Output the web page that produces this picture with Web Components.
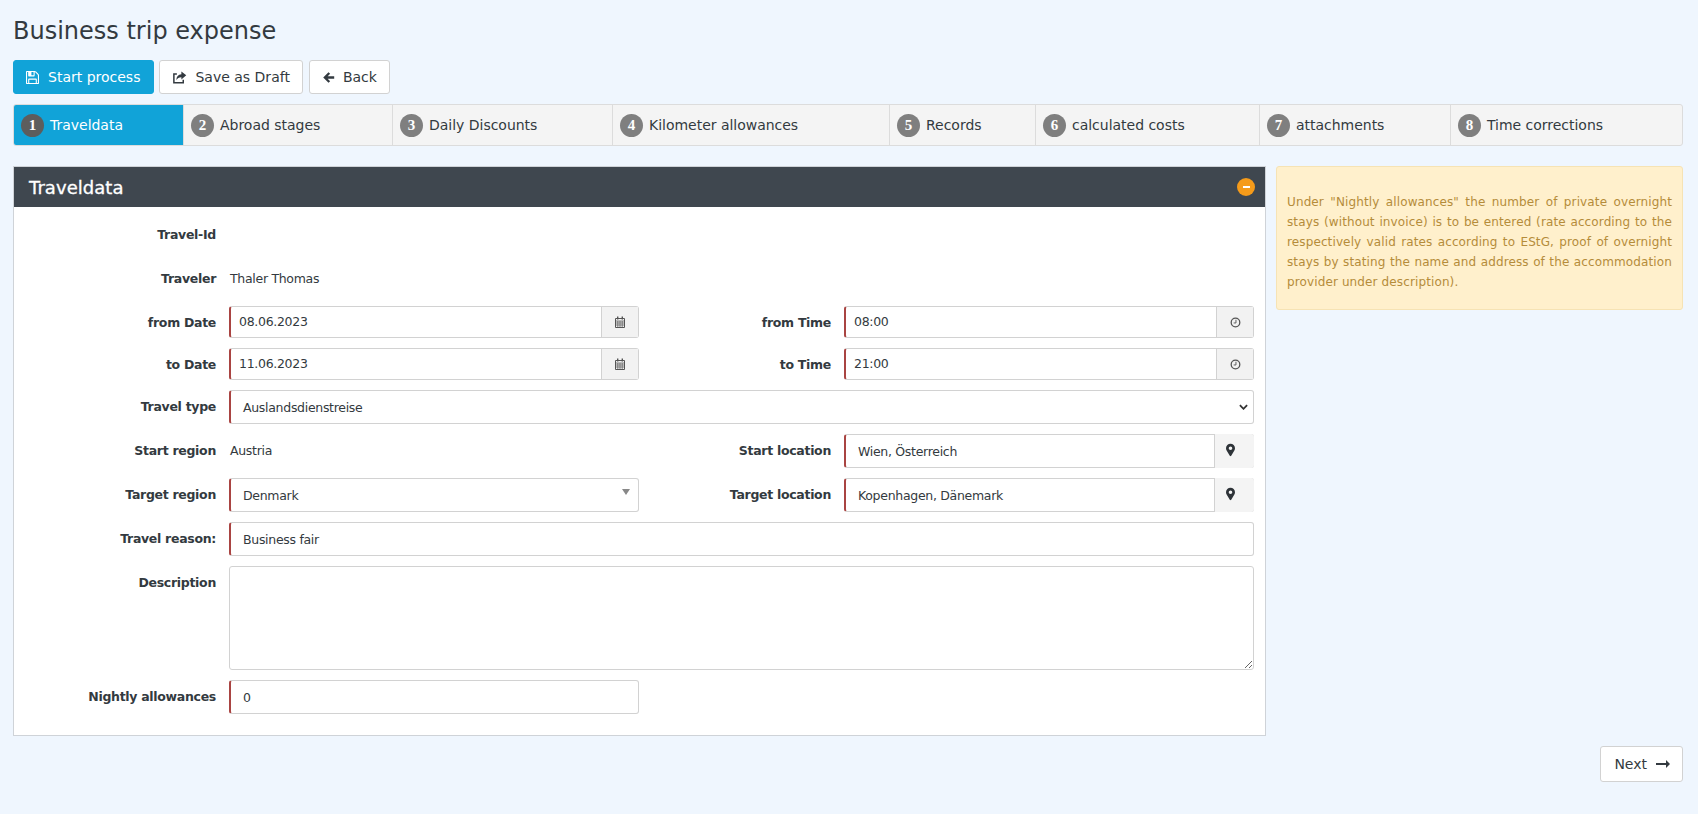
<!DOCTYPE html>
<html>
<head>
<meta charset="utf-8">
<title>Business trip expense</title>
<style>
  html, body { margin: 0; background: #eff6fe; }
  body {
    padding: 0 15px 0 13px;
    font-family: "DejaVu Sans", sans-serif;
    font-size: 13px;
    color: #333a40;
    letter-spacing: -0.3px;
  }
</style>
</head>
<body>
<x-title>Business trip expense</x-title>

<x-toolbar>
  <x-btn primary icon="save">Start process</x-btn>
  <x-btn icon="share">Save as Draft</x-btn>
  <x-btn icon="back">Back</x-btn>
</x-toolbar>

<x-steps>
  <x-step n="1" active style="flex-basis:169px">Traveldata</x-step>
  <x-step n="2" style="flex-basis:209px">Abroad stages</x-step>
  <x-step n="3" style="flex-basis:220px">Daily Discounts</x-step>
  <x-step n="4" style="flex-basis:277px">Kilometer allowances</x-step>
  <x-step n="5" style="flex-basis:146px">Records</x-step>
  <x-step n="6" style="flex-basis:224px">calculated costs</x-step>
  <x-step n="7" style="flex-basis:191px">attachments</x-step>
  <x-step n="8" style="flex-basis:234px">Time corrections</x-step>
</x-steps>

<x-layout>
  <x-panel heading="Traveldata">
    <x-row><x-field label="Travel-Id"></x-field></x-row>
    <x-row><x-field label="Traveler">Thaler Thomas</x-field></x-row>
    <x-row small>
      <x-field label="from Date"><x-input tight addon="calendar">08.06.2023</x-input></x-field>
      <x-field second label="from Time"><x-input tight addon="clock">08:00</x-input></x-field>
    </x-row>
    <x-row small>
      <x-field label="to Date"><x-input tight addon="calendar">11.06.2023</x-input></x-field>
      <x-field second label="to Time"><x-input tight addon="clock">21:00</x-input></x-field>
    </x-row>
    <x-row><x-field label="Travel type"><x-input caret="chevron">Auslandsdienstreise</x-input></x-field></x-row>
    <x-row>
      <x-field label="Start region">Austria</x-field>
      <x-field second label="Start location"><x-input addon="marker">Wien, Österreich</x-input></x-field>
    </x-row>
    <x-row>
      <x-field label="Target region"><x-input caret="triangle">Denmark</x-input></x-field>
      <x-field second label="Target location"><x-input addon="marker">Kopenhagen, Dänemark</x-input></x-field>
    </x-row>
    <x-row><x-field label="Travel reason:"><x-input>Business fair</x-input></x-field></x-row>
    <x-row><x-field label="Description"><x-area></x-area></x-field></x-row>
    <x-row last>
      <x-field label="Nightly allowances"><x-input>0</x-input></x-field>
      <x-field second></x-field>
    </x-row>
  </x-panel>
  <x-note>Under "Nightly allowances" the number of private overnight stays (without invoice) is to be entered (rate according to the respectively valid rates according to EStG, proof of overnight stays by stating the name and address of the accommodation provider under description).</x-note>
</x-layout>

<x-footer><x-btn icon="next" trailing>Next</x-btn></x-footer>

<script>
const ICONS = {
  save: `<svg viewBox="0 0 1536 1536" width="13" height="13"><path fill="currentColor" d="M384 1408h768v-384h-768v384zm896 0h128v-896q0-14-10-38.5t-20-34.5l-281-281q-10-10-34-20t-39-10v416q0 40-28 68t-68 28h-576q-40 0-68-28t-28-68v-416h-128v1280h128v-416q0-40 28-68t68-28h832q40 0 68 28t28 68v416zm-384-928v-320q0-13-9.5-22.5t-22.5-9.5h-192q-13 0-22.5 9.5t-9.5 22.5v320q0 13 9.5 22.5t22.5 9.5h192q13 0 22.5-9.5t9.5-22.5zm640 32v928q0 40-28 68t-68 28h-1344q-40 0-68-28t-28-68v-1344q0-40 28-68t68-28h928q40 0 88 20t76 48l280 280q28 28 48 76t20 88z"/></svg>`,
  share: `<svg viewBox="0 0 16 16" width="15" height="15"><path fill="none" stroke="currentColor" stroke-width="1.600" d="M12 10.500v3.200H2V4.200h3.200"/><path fill="currentColor" d="M10 1.500l5.200 4.200L10 10V7.600C7.600 7.600 5.600 8.400 4.600 11c0-4 2-6.200 5.400-6.400z"/></svg>`,
  back: `<svg viewBox="0 0 16 16" width="13" height="13"><path fill="currentColor" d="M8 1.500L1.500 8 8 14.500l2-2-3-3h8v-3H7l3-3z"/></svg>`,
  next: `<svg viewBox="0 0 14 8" width="14" height="8"><path fill="currentColor" d="M0 3h10V0l4 4-4 4V5H0z"/></svg>`,
  calendar: `<svg viewBox="0 0 12 12" width="12" height="12"><path fill="none" stroke="currentColor" d="M1.500 2.500h9v9h-9z"/><path fill="none" stroke="currentColor" stroke-width=".7" d="M1.500 5h9M1.500 7h9M1.500 9h9M3.800 5v6M6 5v6M8.200 5v6"/><path fill="currentColor" d="M3 .5h1.400v3H3zM7.600 .5H9v3H7.600z"/></svg>`,
  clock: `<svg viewBox="0 0 12 12" width="11" height="11"><circle cx="6" cy="6" r="4.700" fill="none" stroke="currentColor" stroke-width="1.400"/><path fill="none" stroke="currentColor" d="M6.500 3v3.500H4"/></svg>`,
  marker: `<svg viewBox="0 0 10 14" width="9" height="14"><path fill="currentColor" fill-rule="evenodd" d="M5 0a5 5 0 0 1 5 5c0 1-.3 1.700-.7 2.500L5.800 13.400a1 1 0 0 1-1.600 0L.7 7.500C.3 6.700 0 6 0 5a5 5 0 0 1 5-5zm0 3a2 2 0 1 0 0 4 2 2 0 0 0 0-4z"/></svg>`,
  chevron: `<svg viewBox="0 0 10 6" width="9" height="6"><path fill="none" stroke="currentColor" stroke-width="2" d="M1 1l4 4 4-4"/></svg>`,
  triangle: `<svg viewBox="0 0 8 6" width="8" height="6"><path fill="#888" d="M0 0h8L4 6z"/></svg>`
};

// small helper, every element below is just markup + styles in a shadow root
function define(name, css, html, setup) {
  customElements.define(name, class extends HTMLElement {
    constructor() {
      super();
      this.attachShadow({ mode: "open" });
    }
    connectedCallback() {
      const body = typeof html === "function" ? html(this) : html;
      this.shadowRoot.innerHTML = `<style>${css}</style>${body}`;
      if (setup) setup(this);
    }
  });
}

define("x-title", `
  :host { display: block; padding-top: 17px; font-size: 24px; line-height: 28px; letter-spacing: 0; margin-bottom: 15px; }
`, `<slot></slot>`);

define("x-toolbar", `
  :host { display: flex; gap: 5px; align-items: center; margin-bottom: 10px; }
`, `<slot></slot>`);

define("x-btn", `
  :host { display: inline-flex; align-items: center; height: 34px; box-sizing: border-box; padding: 0 12px; gap: 9px;
    background: #fff; border: 1px solid #d2d2d2; border-radius: 3px; font-size: 14px; letter-spacing: 0; }
  :host([primary]) { background: #11a3d8; border-color: #11a3d8; color: #fff; padding-right: 13px; }
  :host([icon="share"]) { gap: 8px; }
  :host([icon="back"]) { gap: 8px; margin-left: 1px; }
  :host([trailing]) { gap: 9px; padding: 0 12px 0 13px; }
  svg { display: block; }
  .i { display: block; }
`, el => {
  const icon = `<span class="i">${ICONS[el.getAttribute("icon")] || ""}</span>`;
  return el.hasAttribute("trailing") ? `<slot></slot>${icon}` : `${icon}<slot></slot>`;
});

define("x-steps", `
  :host { display: flex; height: 42px; box-sizing: border-box; border: 1px solid #dcdcdc; border-radius: 3px; background: #f4f4f4; margin-bottom: 20px; overflow: hidden; }
`, `<slot></slot>`);

define("x-step", `
  :host { display: flex; align-items: center; flex: 0 0 auto; box-sizing: border-box; padding-left: 7px; gap: 6px; font-size: 14px; letter-spacing: -.02px; border-left: 1px solid #dcdcdc; }
  :host(:first-child) { border-left: 0; padding-left: 7px; }
  :host([active]) { background: #11a3d8; color: #fff; }
  b { display: flex; align-items: center; justify-content: center; width: 23px; height: 23px; border-radius: 50%; background: #7f7f7f; color: #fff;
    font: bold 15px "Liberation Serif", serif; letter-spacing: 0; }
  :host([active]) b { background: #5d5d5d; }
`, el => `<b>${el.getAttribute("n")}</b><slot></slot>`);

define("x-layout", `
  :host { display: flex; gap: 10px; align-items: flex-start; margin-bottom: 10px; }
`, `<slot></slot>`);

define("x-panel", `
  :host { display: block; flex: 0 0 1253px; box-sizing: border-box; border: 1px solid #cfd3d8; background: #fff; }
  header { display: flex; align-items: center; justify-content: space-between; height: 40px; padding: 0 10px 0 15px; background: #3f474f; color: #fff; font-size: 18px; letter-spacing: .05px; -webkit-text-stroke: .3px #fff; }
  i { display: flex; align-items: center; justify-content: center; width: 18px; height: 18px; border-radius: 50%; background: #f59b1a; }
  i::after { content: ""; width: 7px; height: 1.5px; background: #fff; }
  main { display: block; padding: 11px 11px 21px 0; }
`, el => `<header><span>${el.getAttribute("heading")}</span><i></i></header><main><slot></slot></main>`);

define("x-row", `
  :host { display: flex; margin-bottom: 10px; min-height: 34px; }
  :host([small]) { min-height: 32px; }
  :host([last]) { margin-bottom: 0; }
`, `<slot></slot>`);

define("x-field", `
  :host { display: grid; flex: 1 1 0; grid-template-columns: 203px 1fr; column-gap: 12px; }
  :host(:not(:only-child):not([second])) { flex: 0 0 625px; }
  :host([second]) { grid-template-columns: 193px 1fr; }
  label { text-align: right; font-weight: bold; font-size: 12.5px; line-height: 17px; padding: 8px 1px 0 0; }
  div { line-height: 17px; padding: 8px 0 0 1px; font-size: 12.500px; min-width: 0; }
  ::slotted(*) { margin: -8px 0 0 -1px; }
`, el => `<label>${el.getAttribute("label") || ""}</label><div><slot></slot></div>`);

define("x-input", `
  :host { display: flex; height: 34px; box-sizing: border-box; background: #fff; border: 1px solid #d2d2d2; border-left: 2px solid #a94442; border-radius: 3px; font-size: 12.500px; }
  :host([tight]) { height: 32px; }
  .v { flex: 1; display: flex; align-items: center; padding-left: 12px; }
  :host([tight]) .v { padding-left: 8px; padding-bottom: 2px; box-sizing: border-box; }
  .add { display: flex; align-items: center; justify-content: center; width: 36px; background: #f2f2f2; border-left: 1px solid #d2d2d2; color: #555; }
  .add.plain { width: 40px; margin: -1px -1px -1px 0; background: #f4f4f4; border-left-color: #d2d2d2; color: #2e3338; border-radius: 0 3px 3px 0; padding: 0 9px 2px 0; box-sizing: border-box; }
  .caret { display: flex; align-items: center; padding-right: 5px; color: #333; }
  .caret.triangle { padding: 0 8px 6px 0; }
  svg { display: block; }
`, el => {
  const addon = el.getAttribute("addon");
  const caret = el.getAttribute("caret");
  let tail = "";
  if (addon) tail = `<span class="add ${addon === "marker" ? "plain" : ""}">${ICONS[addon]}</span>`;
  if (caret) tail = `<span class="caret ${caret}">${ICONS[caret]}</span>`;
  return `<span class="v"><slot></slot></span>${tail}`;
});

define("x-area", `
  :host { display: block; height: 104px; }
  textarea { display: block; box-sizing: border-box; width: 100%; height: 100%; margin: 0; border: 1px solid #d2d2d2; border-radius: 3px; background: #fff; resize: vertical; outline: 0; }
`, `<textarea></textarea>`);

define("x-note", `
  :host { display: block; flex: 1; box-sizing: border-box; height: 144px; padding: 25px 10px 0; background: #fff0cc; border: 1px solid #f6e3b4; border-radius: 3px;
    color: #b58c3a; font-size: 12px; letter-spacing: .12px; line-height: 20px; text-align: justify; }
`, `<slot></slot>`);

define("x-footer", `
  :host { display: flex; justify-content: flex-end; }
  ::slotted(x-btn) { height: 36px; }
`, `<slot></slot>`);
</script>
</body>
</html>
